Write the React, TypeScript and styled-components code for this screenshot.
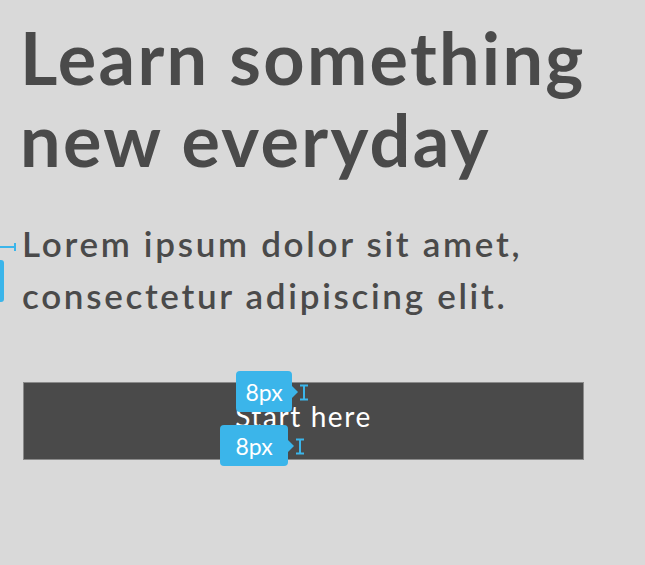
import React from "react";
import styled, { createGlobalStyle } from "styled-components";

const Global = createGlobalStyle`
  html, body { margin: 0; padding: 0; background: #d9d9d9; }
  body { font-family: Lato, "Noto Sans", sans-serif; color: #4a4a4a; }
`;

const Page = styled.div`
  width: 645px;
  height: 565px;
  box-sizing: border-box;
  padding: 16px 0 0 20px;
  overflow: hidden;
  display: flex;
  flex-direction: column;
  align-items: flex-start;
`;

const Title = styled.h1`
  margin: 0;
  font-size: 72px;
  line-height: 82px;
  font-weight: 700;
  letter-spacing: 2.3px;
`;

const Subtitle = styled.p`
  position: relative;
  margin: 37px 0 0 2px;
  font-size: 35px;
  line-height: 52px;
  font-weight: 600;
  letter-spacing: 2.7px;
`;

const LeftGuide = styled.div`
  position: absolute;
  left: -22px;
  top: 29px;
  width: 15px;
  height: 2px;
  background: #3bb5ea;
  &::after {
    content: "";
    position: absolute;
    right: -1px;
    top: -3px;
    width: 2px;
    height: 8px;
    background: #3bb5ea;
  }
  &::before {
    content: "";
    position: absolute;
    left: 0;
    top: 14px;
    width: 4px;
    height: 42px;
    background: #3bb5ea;
    border-radius: 0 3px 3px 0;
  }
`;

const Button = styled.div`
  position: relative;
  margin: 61px 0 0 3px;
  width: 561px;
  height: 78px;
  box-sizing: border-box;
  background: #4a4a4a;
  border: 1px solid #8a8a8a;
  display: flex;
  align-items: center;
  justify-content: center;
  padding-bottom: 10px;
  color: #ffffff;
  font-size: 28px;
  font-weight: 400;
  letter-spacing: 1.6px;
`;

const Marker = styled.div<{ $left: number; $top: number }>`
  position: absolute;
  left: ${(p) => p.$left}px;
  top: ${(p) => p.$top}px;
  display: flex;
  align-items: center;
  gap: 7px;
  letter-spacing: 0;
`;

const Badge = styled.div<{ $w: number }>`
  position: relative;
  width: ${(p) => p.$w}px;
  height: 41px;
  box-sizing: border-box;
  background: #3bb5ea;
  border-radius: 4px;
  color: #ffffff;
  font-size: 23px;
  font-weight: 400;
  display: flex;
  align-items: center;
  justify-content: center;
  &::after {
    content: "";
    position: absolute;
    right: -6px;
    top: 50%;
    margin-top: -6px;
    border-style: solid;
    border-width: 6px 0 6px 6px;
    border-color: transparent transparent transparent #3bb5ea;
  }
`;

const Beam = styled.svg`
  flex: none;
  margin-top: 2px;
`;

const IBeam = () => (
  <Beam width="10" height="17" viewBox="0 0 10 17">
    <path d="M1 1.5h8M5 1.5v14M1 15.5h8" stroke="#3bb5ea" strokeWidth="2" fill="none" />
  </Beam>
);

const SpacingMarker = ({ left, top, w }: { left: number; top: number; w: number }) => (
  <Marker $left={left} $top={top}>
    <Badge $w={w}>8px</Badge>
    <IBeam />
  </Marker>
);

export default function App() {
  return (
    <Page>
      <Global />
      <Title>
        Learn something
        <br />
        new everyday
      </Title>
      <Subtitle>
        <LeftGuide />
        Lorem ipsum dolor sit amet,
        <br />
        consectetur adipiscing elit.
      </Subtitle>
      <Button>
        Start here
        <SpacingMarker left={212} top={-12} w={56} />
        <SpacingMarker left={196} top={42} w={68} />
      </Button>
    </Page>
  );
}
